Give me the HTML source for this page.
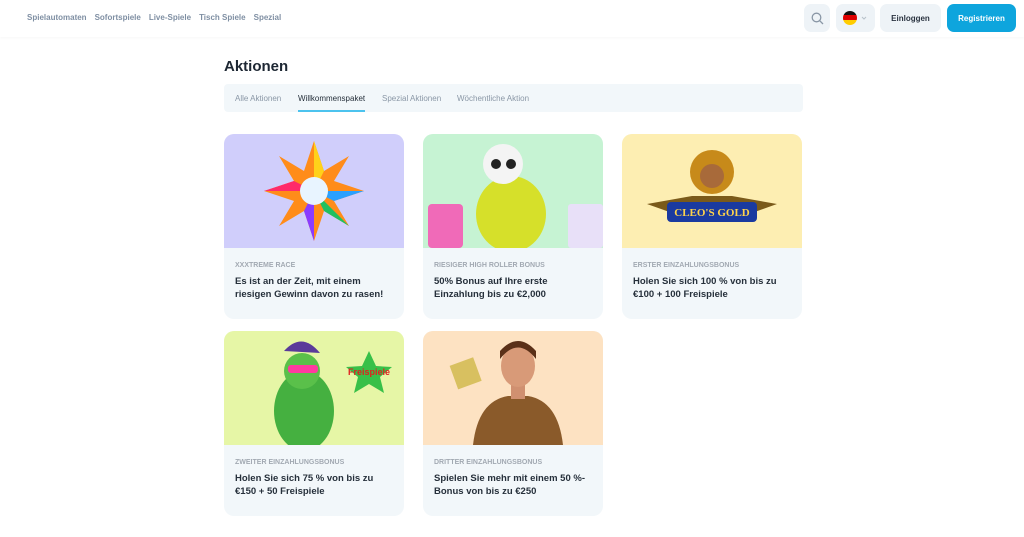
<!DOCTYPE html>
<html><head><meta charset="utf-8"><style>
*{margin:0;padding:0;box-sizing:border-box}
body{width:1024px;height:537px;background:#fff;font-family:"Liberation Sans",sans-serif;position:relative;overflow:hidden}
.hdr{position:absolute;left:0;top:0;width:1024px;height:37px;background:#fff;box-shadow:0 1px 3px rgba(0,0,0,.04)}
.nav{position:absolute;left:27px;top:13px;font-size:8px;font-weight:bold;color:#7f8fa3}
.nav span{margin-right:8px}
.btn{position:absolute;top:4px;height:28px;border-radius:7px;background:#eef3f7;font-size:8px;font-weight:bold;color:#2a3340;display:flex;align-items:center;justify-content:center}
h1{position:absolute;left:224px;top:58px;font-size:15px;color:#1d2733}
.tabs{position:absolute;left:224px;top:84px;width:579px;height:28px;background:#f2f7fa;border-radius:4px;font-size:8px;color:#8a97a6}
.tabs span{position:absolute;top:10px}
.card{position:absolute;width:180px;height:185px;background:#f2f7fa;border-radius:10px;overflow:hidden}
.img{height:114px;position:relative;overflow:hidden}
.cat{position:absolute;left:11px;top:128px;font-size:7px;font-weight:bold;color:#a2a9b2}
.t{position:absolute;left:11px;top:141px;width:160px;font-size:9.5px;font-weight:bold;color:#26303b;line-height:13px}
</style></head><body>
<div class="hdr">
<div class="nav"><span>Spielautomaten</span><span>Sofortspiele</span><span>Live-Spiele</span><span>Tisch Spiele</span><span>Spezial</span></div>
<div class="btn" style="left:804px;width:26px"><svg width="13" height="13" viewBox="0 0 13 13"><circle cx="5.5" cy="5.5" r="4.3" fill="none" stroke="#8a97a6" stroke-width="1.3"/><path d="M8.7 8.7L12 12" stroke="#8a97a6" stroke-width="1.3"/></svg></div>
<div class="btn" style="left:836px;width:39px"><svg width="28" height="16" viewBox="0 0 28 16"><clipPath id="c"><circle cx="8" cy="8" r="7"/></clipPath><g clip-path="url(#c)"><rect x="0" y="0" width="16" height="5" fill="#111"/><rect x="0" y="5" width="16" height="5" fill="#d00"/><rect x="0" y="10" width="16" height="6" fill="#fc0"/></g><path d="M20 7l2 2 2-2" fill="none" stroke="#b7c0ca" stroke-width="1"/></svg></div>
<div class="btn" style="left:880px;width:61px">Einloggen</div>
<div class="btn" style="left:947px;width:69px;background:#0ea5dd;color:#fff">Registrieren</div>
</div>
<h1>Aktionen</h1>
<div class="tabs"><span style="left:11px">Alle Aktionen</span><span style="left:74px;color:#26303b">Willkommenspaket</span><span style="left:158px">Spezial Aktionen</span><span style="left:233px">Wöchentliche Aktion</span>
<div style="position:absolute;left:74px;top:26px;width:67px;height:2px;background:#4cc3ee"></div></div>

<div class="card" style="left:224px;top:134px"><div class="img" style="background:#d0cefb"><svg width="180" height="114"><g transform="translate(90,57)"><polygon points="0,-50 10,-20 35,-35 20,-10 50,0 20,10 35,35 10,20 0,50 -10,20 -35,35 -20,10 -50,0 -20,-10 -35,-35 -10,-20" fill="#ff8c1a"/><polygon points="0,-50 10,-20 0,0" fill="#ffd21a"/><polygon points="50,0 20,10 0,0" fill="#2aa0ff"/><polygon points="0,50 -10,20 0,0" fill="#8a3cff"/><polygon points="-50,0 -20,-10 0,0" fill="#ff2a6a"/><polygon points="35,35 10,20 0,0" fill="#20c060"/><circle r="14" fill="#e8f4ff"/></g></svg></div><div class="cat">XXXTREME RACE</div><div class="t">Es ist an der Zeit, mit einem riesigen Gewinn davon zu rasen!</div></div>

<div class="card" style="left:423px;top:134px"><div class="img" style="background:#c6f3d3"><svg width="180" height="114"><rect x="5" y="70" width="35" height="44" rx="4" fill="#f06ab8"/><ellipse cx="88" cy="80" rx="35" ry="38" fill="#d6e02a"/><circle cx="80" cy="30" r="20" fill="#f4f4f4"/><circle cx="73" cy="30" r="5" fill="#222"/><circle cx="88" cy="30" r="5" fill="#222"/><rect x="145" y="70" width="35" height="44" rx="3" fill="#e8e0f8"/></svg></div><div class="cat">RIESIGER HIGH ROLLER BONUS</div><div class="t">50% Bonus auf Ihre erste Einzahlung bis zu €2,000</div></div>

<div class="card" style="left:622px;top:134px"><div class="img" style="background:#fdeeb2"><svg width="180" height="114"><path d="M25 70 L70 62 L110 62 L155 70 L110 86 L70 86Z" fill="#7a5a1a"/><circle cx="90" cy="38" r="22" fill="#c78a1a"/><circle cx="90" cy="42" r="12" fill="#a86a3a"/><rect x="45" y="68" width="90" height="20" rx="4" fill="#1a3aa0"/><text x="90" y="82" font-size="11" font-weight="bold" fill="#ffd34a" text-anchor="middle" font-family="Liberation Serif">CLEO'S GOLD</text></svg></div><div class="cat">ERSTER EINZAHLUNGSBONUS</div><div class="t">Holen Sie sich 100 % von bis zu €100 + 100 Freispiele</div></div>

<div class="card" style="left:224px;top:331px"><div class="img" style="background:#e6f6a6"><svg width="180" height="114"><ellipse cx="80" cy="80" rx="30" ry="40" fill="#45b040"/><circle cx="78" cy="40" r="18" fill="#5ac04a"/><rect x="64" y="34" width="30" height="8" rx="3" fill="#ff3aa0"/><path d="M60 20 Q78 0 96 22" fill="#5a3a9a"/><polygon points="145,20 152,35 168,36 156,46 160,62 145,53 130,62 134,46 122,36 138,35" fill="#38c048"/><text x="145" y="44" font-size="9" fill="#e02020" text-anchor="middle" font-weight="bold">Freispiele</text></svg></div><div class="cat">ZWEITER EINZAHLUNGSBONUS</div><div class="t">Holen Sie sich 75 % von bis zu €150 + 50 Freispiele</div></div>

<div class="card" style="left:423px;top:331px"><div class="img" style="background:#fde2c2"><svg width="180" height="114"><path d="M50 114 Q55 70 85 65 L105 65 Q135 70 140 114Z" fill="#8a5a2a"/><rect x="88" y="50" width="14" height="18" fill="#d09070"/><ellipse cx="95" cy="35" rx="17" ry="21" fill="#d89a78"/><path d="M77 28 Q95 5 113 28 L113 20 Q95 0 77 20Z" fill="#5a3018"/><rect x="30" y="30" width="25" height="25" fill="#d8c060" transform="rotate(-20 42 42)"/></svg></div><div class="cat">DRITTER EINZAHLUNGSBONUS</div><div class="t">Spielen Sie mehr mit einem 50 %-Bonus von bis zu €250</div></div>
</body></html>
